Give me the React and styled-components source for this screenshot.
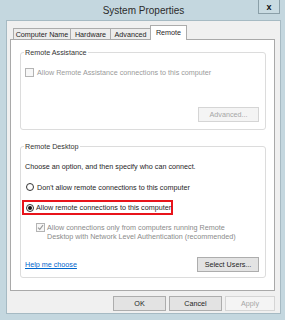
import React from "react";
import styled, { createGlobalStyle } from "styled-components";

const GlobalStyle = createGlobalStyle`
  html, body {
    margin: 0;
    padding: 0;
  }
  body {
    background: #c4d7df;
    font-family: "Liberation Sans", Arial, sans-serif;
  }
`;

const Window = styled.div`
  width: 285px;
  height: 320px;
  box-sizing: border-box;
  background: #c4d7df;
  display: flex;
  flex-direction: column;
  padding: 0 4px 6px 6px;
`;

const TitleBar = styled.div`
  position: relative;
  height: 20px;
  display: flex;
  align-items: center;
  justify-content: center;
  font-size: 10px;
  color: #2b2b2b;
`;

const CloseButton = styled.div`
  position: absolute;
  top: 0;
  right: 1px;
  width: 22px;
  height: 14px;
  box-sizing: border-box;
  border: 1px solid #8a9fa8;
  border-top: none;
  background: #c9dbe2;
  display: flex;
  align-items: center;
  justify-content: center;
  font-size: 9px;
  font-weight: 700;
  color: #111;
`;

const Client = styled.div`
  flex: 1;
  background: #f0f0f0;
  border: 1px solid #a6bac3;
  padding: 4px 5px 0 3px;
  display: flex;
  flex-direction: column;
  font-size: 7.2px;
  color: #1e1e1e;
`;

const TabStrip = styled.div`
  display: flex;
  align-items: flex-start;
  height: 14px;
  padding-left: 3px;
  position: relative;
  z-index: 1;
`;

const Tab = styled.div`
  width: ${(p) => p.$w}px;
  box-sizing: border-box;
  height: ${(p) => (p.$active ? 15 : 11)}px;
  margin-top: ${(p) => (p.$active ? 0 : 3)}px;
  margin-left: -1px;
  border: 1px solid #acacac;
  border-bottom: none;
  background: ${(p) => (p.$active ? "#fff" : "#ececec")};
  display: flex;
  align-items: ${(p) => (p.$active ? "flex-start" : "center")};
  padding-top: ${(p) => (p.$active ? 2 : 0)}px;
  justify-content: center;
  white-space: nowrap;
  &:first-child {
    margin-left: 0;
  }
`;

const Panel = styled.div`
  height: 252px;
  box-sizing: border-box;
  background: #fff;
  border: 1px solid #a9a9a9;
  padding: 12px 8px 0 9px;
  display: flex;
  flex-direction: column;
  gap: 16px;
`;

const Group = styled.div`
  position: relative;
  height: ${(p) => p.$h}px;
  box-sizing: border-box;
  border: 1px solid #dcdcdc;
  border-radius: 3px;
  padding: ${(p) => p.$pad};
  display: flex;
  flex-direction: column;
`;

const Caption = styled.span`
  position: absolute;
  top: -5px;
  left: 3px;
  padding: 0 1px;
  background: #fff;
  line-height: 9px;
  color: #333;
`;

const Row = styled.div`
  display: flex;
  align-items: center;
  gap: 3px;
  height: ${(p) => p.$h || 10}px;
  margin-top: ${(p) => p.$mt || 0}px;
  margin-left: ${(p) => p.$ml || 0}px;
  color: ${(p) => (p.$disabled ? "#9a9a9a" : "inherit")};
  white-space: nowrap;
`;

const Text = styled.div`
  line-height: 9px;
  margin-top: ${(p) => p.$mt || 0}px;
`;

const Highlight = styled.div`
  width: 151px;
  height: 15px;
  box-sizing: border-box;
  border: 2px solid #e8141b;
  margin-top: 8px;
  margin-left: -3px;
  display: flex;
  align-items: center;
  gap: 2px;
  padding-left: 2px;
  white-space: nowrap;
`;

const CheckBox = styled.span`
  width: 9px;
  height: 9px;
  box-sizing: border-box;
  border: 1px solid ${(p) => (p.$disabled ? "#b4b4b4" : "#333")};
  background: ${(p) => (p.$disabled ? "#f7f7f7" : "#fff")};
  flex-shrink: 0;
  display: flex;
  align-items: center;
  justify-content: center;
`;

const Radio = styled.span`
  width: 8px;
  height: 8px;
  box-sizing: border-box;
  border-radius: 50%;
  border: 1px solid #333;
  background: #fff;
  flex-shrink: 0;
  display: flex;
  align-items: center;
  justify-content: center;
  &::after {
    content: "";
    display: ${(p) => (p.$checked ? "block" : "none")};
    width: 4px;
    height: 4px;
    border-radius: 50%;
    background: #111;
  }
`;

const NlaBlock = styled.div`
  display: flex;
  gap: 2px;
  margin-top: 8px;
  margin-left: 11px;
  color: #8a8a8a;
  line-height: 9px;
`;

const BottomRow = styled.div`
  margin-top: auto;
  display: flex;
  align-items: center;
  justify-content: space-between;
`;

const Link = styled.a`
  color: #0066cc;
  text-decoration: underline;
`;

const Button = styled.div`
  width: ${(p) => p.$w}px;
  height: 15px;
  box-sizing: border-box;
  border: 1px solid ${(p) => (p.$disabled ? "#d5d5d5" : "#adadad")};
  background: ${(p) => (p.$disabled ? "#f4f4f4" : "#e3e3e3")};
  color: ${(p) => (p.$disabled ? "#a6a6a6" : "#1e1e1e")};
  display: flex;
  align-items: center;
  justify-content: center;
  white-space: nowrap;
`;

const ButtonBar = styled.div`
  display: flex;
  justify-content: flex-end;
  gap: 3px;
  margin-top: 5px;
`;

const GroupEnd = styled.div`
  margin-top: auto;
  display: flex;
  justify-content: flex-end;
`;

export default function App() {
  return (
    <>
      <GlobalStyle />
      <Window>
        <TitleBar>
          System Properties
          <CloseButton>x</CloseButton>
        </TitleBar>
        <Client>
          <TabStrip>
            <Tab $w={58}>Computer Name</Tab>
            <Tab $w={41}>Hardware</Tab>
            <Tab $w={41}>Advanced</Tab>
            <Tab $w={37} $active>
              Remote
            </Tab>
          </TabStrip>
          <Panel>
            <Group $h={78} $pad="14px 6px 7px 4px">
              <Caption>Remote Assistance</Caption>
              <Row $disabled>
                <CheckBox $disabled />
                Allow Remote Assistance connections to this computer
              </Row>
              <GroupEnd>
                <Button $w={61} $disabled>
                  Advanced...
                </Button>
              </GroupEnd>
            </Group>
            <Group $h={132} $pad="15px 6px 5px 4px">
              <Caption>Remote Desktop</Caption>
              <Text>Choose an option, and then specify who can connect.</Text>
              <Row $mt={11} $ml={1}>
                <Radio />
                Don't allow remote connections to this computer
              </Row>
              <Highlight>
                <Radio $checked />
                Allow remote connections to this computer
              </Highlight>
              <NlaBlock>
                <CheckBox $disabled>
                  <svg width="7" height="7" viewBox="0 0 7 7">
                    <path
                      d="M1 3.6 L2.8 5.4 L6 1.2"
                      fill="none"
                      stroke="#9a9a9a"
                      strokeWidth="1.1"
                    />
                  </svg>
                </CheckBox>
                <div>
                  Allow connections only from computers running Remote
                  <br />
                  Desktop with Network Level Authentication (recommended)
                </div>
              </NlaBlock>
              <BottomRow>
                <Link>Help me choose</Link>
                <Button $w={62}>Select Users...</Button>
              </BottomRow>
            </Group>
          </Panel>
          <ButtonBar>
            <Button $w={53}>OK</Button>
            <Button $w={53}>Cancel</Button>
            <Button $w={50} $disabled>
              Apply
            </Button>
          </ButtonBar>
        </Client>
      </Window>
    </>
  );
}
